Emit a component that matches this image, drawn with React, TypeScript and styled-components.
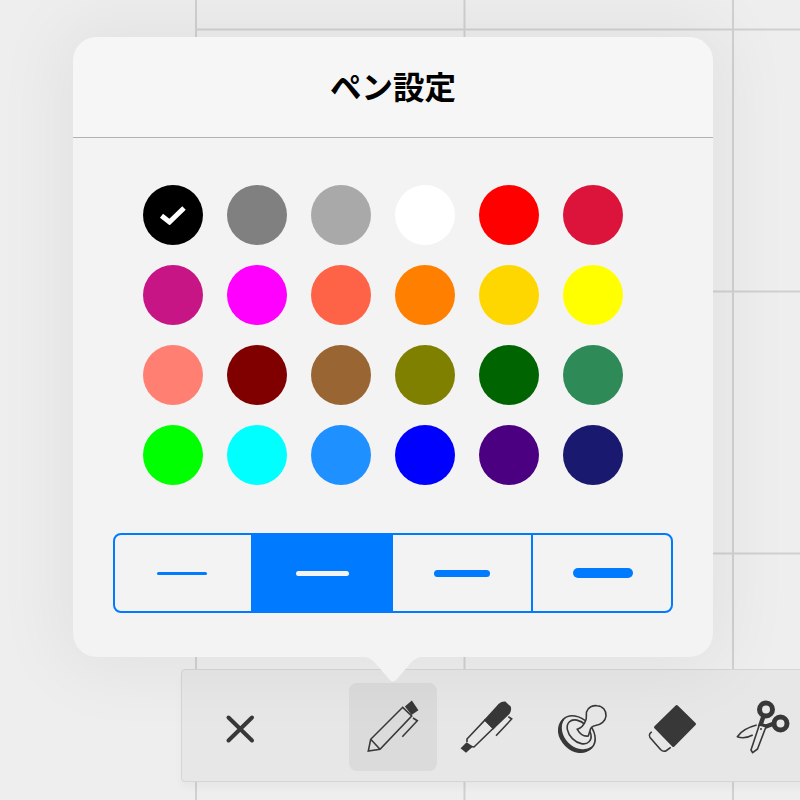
import React from "react"
import styled, { createGlobalStyle } from "styled-components"

const BLUE = "#007aff"
const INK = "#383838"
const PANEL = "#f3f3f3"
const BAR = "#e7e7e7"

const COLORS = [
  "#000000", "#808080", "#a9a9a9", "#ffffff", "#ff0000", "#dc143c",
  "#c71585", "#ff00ff", "#ff6347", "#ff7f00", "#ffd700", "#ffff00",
  "#ff8072", "#800000", "#996633", "#808000", "#006400", "#2e8b57",
  "#00ff00", "#00ffff", "#1e90ff", "#0000ff", "#4b0082", "#191970",
]

const WIDTHS = [
  { width: 50, height: 3 },
  { width: 53, height: 5 },
  { width: 56, height: 7 },
  { width: 60, height: 10 },
]

const GlobalStyle = createGlobalStyle`
  html, body {
    margin: 0;
    padding: 0;
    width: 800px;
    height: 800px;
    overflow: hidden;
    font-family: "Noto Sans CJK JP", "Noto Sans", sans-serif;
  }
`

// the left column of the sheet has no horizontal rules, only the vertical one at 195
const Canvas = styled.div`
  position: relative;
  width: 800px;
  height: 800px;
  overflow: hidden;
  background-color: #eeeeee;
  background-image:
    linear-gradient(90deg, #d0d0d0 2px, transparent 2px),
    linear-gradient(90deg, #eeeeee 195px, transparent 195px),
    linear-gradient(180deg, #d0d0d0 2px, transparent 2px);
  background-size: 268.5px 262px, 800px 800px, 268.5px 262px;
  background-position: 195px 0, 0 0, 195px 28.5px;
  background-repeat: repeat, no-repeat, repeat;
`

const Popover = styled.div`
  position: absolute;
  left: 73px;
  top: 37px;
  z-index: 2;
  width: 640px;
  height: 620px;
  border-radius: 24px;
  background: ${PANEL};
  box-shadow: 0 0 70px 16px rgba(0, 0, 0, 0.05);

  &::after {
    content: "";
    position: absolute;
    left: 288px;
    bottom: -26px;
    width: 64px;
    height: 27px;
    background: ${PANEL};
    clip-path: path("M0 0 H64 C56 1 52 4 48 9 L36 23 Q32 28 28 23 L16 9 C12 4 8 1 0 0 Z");
  }
`

const Header = styled.header`
  display: flex;
  align-items: center;
  justify-content: center;
  height: 101px;
  box-sizing: border-box;
  padding-bottom: 3px;
  border-bottom: 1px solid #b2b2b2;
  border-radius: 24px 24px 0 0;
  background: #f6f6f6;
`

const Title = styled.h1`
  margin: 0;
  font-size: 31.5px;
  line-height: 1;
  font-weight: 700;
  color: #000;
`

const Body = styled.div`
  padding: 47px 40px 0;
`

const Swatches = styled.div`
  display: grid;
  grid-template-columns: repeat(6, 60px);
  gap: 20px 24px;
  margin-left: 30px;
`

const Swatch = styled.div<{ $color: string }>`
  display: flex;
  align-items: center;
  justify-content: center;
  width: 60px;
  height: 60px;
  border-radius: 50%;
  background: ${({ $color }) => $color};
`

const Segments = styled.div`
  display: grid;
  grid-template-columns: 136px 142px 140px 138px;
  width: 560px;
  height: 80px;
  box-sizing: border-box;
  margin-top: 48px;
  border: 2px solid ${BLUE};
  border-radius: 8px;
  overflow: hidden;
`

const Segment = styled.div<{ $active: boolean }>`
  display: flex;
  align-items: center;
  justify-content: center;
  background: ${({ $active }) => ($active ? BLUE : "transparent")};
  color: ${({ $active }) => ($active ? PANEL : BLUE)};

  &:first-child {
    padding-right: 2px;
  }

  &:nth-child(3) {
    border-right: 2px solid ${BLUE};
  }

  &:last-child {
    padding-left: 2px;
  }
`

const StrokeLine = styled.span<{ $width: number; $height: number }>`
  display: block;
  width: ${({ $width }) => $width}px;
  height: ${({ $height }) => $height}px;
  border-radius: ${({ $height }) => $height / 2}px;
  background: currentColor;
`

const Toolbar = styled.div`
  position: absolute;
  left: 181px;
  top: 669px;
  z-index: 1;
  display: flex;
  gap: 5px;
  width: 640px;
  height: 113px;
  box-sizing: border-box;
  padding: 13px 14px;
  border: 1px solid #d6d6d6;
  border-radius: 4px;
  background: ${BAR};
  box-shadow: 0 6px 8px rgba(0, 0, 0, 0.03);
`

const ToolButton = styled.button<{ $active?: boolean; $spaced?: boolean }>`
  flex: none;
  width: 88px;
  height: 88px;
  padding: 0;
  margin-right: ${({ $spaced }) => ($spaced ? "60px" : "0")};
  border: 0;
  border-radius: 8px;
  background: ${({ $active }) => ($active ? "#dbdbdb" : "transparent")};
  color: ${INK};

  svg {
    display: block;
  }
`

const Icon: React.FC<{ children: React.ReactNode }> = ({ children }) => (
  <svg width="88" height="88" viewBox="0 0 88 88" fill="none" stroke="currentColor" strokeWidth="1.6">
    {children}
  </svg>
)

const App: React.FC = () => (
  <Canvas>
    <GlobalStyle />
    <Popover>
      <Header>
        <Title>ペン設定</Title>
      </Header>
      <Body>
        <Swatches>
          {COLORS.map((color, i) => (
            <Swatch key={color} $color={color}>
              {i === 0 && (
                <svg width="30" height="20" viewBox="0 0 30 20" fill="none" stroke="#fff" strokeWidth="5">
                  <path d="M3.5 10.7 L11.5 17 L26 3" />
                </svg>
              )}
            </Swatch>
          ))}
        </Swatches>
        <Segments>
          {WIDTHS.map((w, i) => (
            <Segment key={w.width} $active={i === 1}>
              <StrokeLine $width={w.width} $height={w.height} />
            </Segment>
          ))}
        </Segments>
      </Body>
    </Popover>
    <Toolbar>
      <ToolButton $spaced>
        <Icon>
          <path d="M32.5 34.5 L56 57.5 M56 34.5 L32.5 57.5" strokeWidth="4" strokeLinecap="round" />
        </Icon>
      </ToolButton>
      <ToolButton $active>
        <Icon>
          <path d="M53.7 24.3 L62.7 33 L31 66.3 L19.3 68 L21.7 56.3 Z M21.7 56.3 L31 66.3" />
          <path d="M57 23.7 L62.7 18.7 L68.3 27 L62.7 31 Z" fill="currentColor" />
          <path d="M64 35 L68.3 37.7 L53.3 53.7" />
        </Icon>
      </ToolButton>
      <ToolButton>
        <Icon>
          <path d="M25 59 L25 56 L43 37 L51.3 45.3 L32 64 L29 63.5" />
          <path d="M19.7 65.3 L24.7 60.3 L29.7 63.7 L24 68.7 Z" fill="currentColor" />
          <path d="M43 37 L57.3 21.3 Q60 19 63 19.3 L68 24 Q69 27 67 30.3 L51.3 45.3 Z" fill="currentColor" />
          <path d="M66.3 33.7 L69.7 36 L54 52.7" />
        </Icon>
      </ToolButton>
      <ToolButton>
        <Icon>
          <g transform="rotate(45 42 51)">
            <ellipse cx="42" cy="50" rx="20" ry="14.5" />
            <path d="M22 50 C22 61 31 67 42 67 C53 67 62 61 62 50 C60.5 58 52 64 42 64 C32 64 23.5 58 22 50 Z" fill="currentColor" />
            <ellipse cx="42" cy="48" rx="14" ry="9.5" />
          </g>
          <path
            d="M42.3 46.3 C46 45 49 42 50.5 38 C52 36 51 33 51.5 29 C53 24 58 22.3 62 22.7 C68 23 71.5 28 71 33 C70.5 38 66 42 60.5 42.5 C57.5 43 55.5 45 55 47.5 C54.5 49 54 51 53.3 53 C50 53.5 45.5 52 42.3 46.3 Z"
            fill={BAR}
          />
        </Icon>
      </ToolButton>
      <ToolButton>
        <Icon>
          <path d="M48.7 23.5 L66.5 41 L45.3 62.5 L27.5 44.3 Z" fill="currentColor" strokeLinejoin="round" strokeWidth="3" />
          <path d="M23.7 48.7 L22 50.5 Q20.5 52.5 22 54.5 L32.5 66.5 Q35.5 69.5 38.5 67.5 L42.7 64.3" />
        </Icon>
      </ToolButton>
      <ToolButton>
        <Icon>
          <circle cx="45" cy="26.5" r="6.5" strokeWidth="5" />
          <circle cx="59.5" cy="40.5" r="6.5" strokeWidth="5" />
          <path d="M42.5 33 L39.5 42 L45 43.5 L53 40.5" strokeWidth="4.4" />
          <path d="M38.3 42 L45 43.7 L36.5 66 L31.7 69.7 L30 67 Z" fill={BAR} strokeLinejoin="round" />
          <path d="M35.7 42 C28 44 20 48 16.3 53.7 C22 56 28 54 31.7 52" strokeLinejoin="round" />
          <circle cx="40" cy="46" r="1" fill="currentColor" stroke="none" />
        </Icon>
      </ToolButton>
    </Toolbar>
  </Canvas>
)

export default App
